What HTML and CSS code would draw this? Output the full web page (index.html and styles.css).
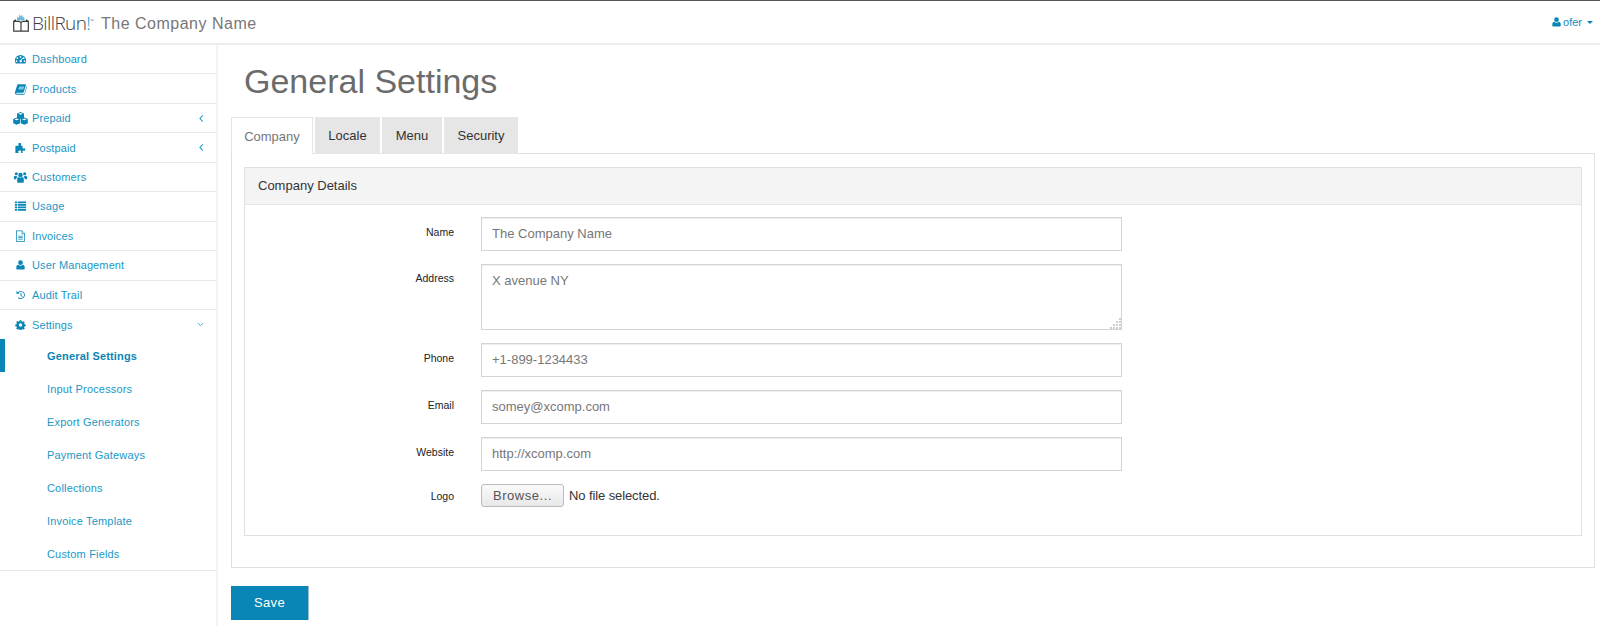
FILE: index.html
```html
<!DOCTYPE html>
<html lang="en">
<head>
<meta charset="utf-8">
<title>General Settings</title>
<link rel="stylesheet" href="styles.css">
</head>
<body>
<svg class="defs" width="0" height="0" aria-hidden="true">
  <symbol id="i-dashboard" viewBox="0 0 16 16"><path fill-rule="evenodd" d="M8 2.500a7.500 7.500 0 0 1 7.500 7.500c0 1.400-.4 2.600-1 3.600-.1.200-.3.300-.5.300H2c-.2 0-.4-.1-.5-.3-.6-1-1-2.200-1-3.600A7.500 7.500 0 0 1 8 2.500zM8 4a1.200 1.200 0 1 0 0 2.400A1.200 1.200 0 0 0 8 4zM3.800 5.700a1.200 1.200 0 1 0 0 2.400 1.200 1.200 0 0 0 0-2.400zM12.200 5.700a1.200 1.200 0 1 0 0 2.400 1.200 1.200 0 0 0 0-2.400zM2.700 9.500a1.200 1.200 0 1 0 0 2.400 1.200 1.200 0 0 0 0-2.400zM13.300 9.500a1.200 1.200 0 1 0 0 2.400 1.200 1.200 0 0 0 0-2.400zM10.200 6.500 8.300 9.400a1.600 1.600 0 1 0 1.100.5l1.600-3z"/></symbol>
  <symbol id="i-book" viewBox="0 0 16 16"><path fill-rule="evenodd" d="M4.500 1.500h10c.6 0 .9.500.7 1.100l-2.700 9c-.3 1-.9 1.400-1.800 1.400H2.800c-.5 0-.8.500-.6.800.2.300.5.400 1 .4h9.400c.4 0 .6-.2.700-.5l3-9.700c.4.300.6.800.4 1.400L13.900 14c-.2.800-1 1.500-1.900 1.500H3.200c-1.300 0-2.400-1-2.600-2.200-.1-.5-.1-.9.100-1.300l3-9.500c.1-.5.400-1 .8-1zM6 5v1h6.500l.3-1zM5.300 7.200v1h6.500l.3-1z"/></symbol>
  <symbol id="i-cubes" viewBox="0 0 18 16"><path fill-rule="evenodd" d="M9 0l4.300 1.700V7L9 8.600 4.700 7V1.700zM6.200 2.300 9 3.400l2.800-1.100L9 1.200zM0 8.500l4.300-1.700 4.300 1.700v5.300l-4.300 1.900L0 13.800zM1.500 9.100l2.800 1.100 2.800-1.100-2.800-1zM9.400 8.500l4.300-1.700L18 8.500v5.300l-4.300 1.900-4.300-1.900zM10.900 9.100l2.800 1.100 2.800-1.100-2.800-1z"/></symbol>
  <symbol id="i-puzzle" viewBox="0 0 16 16"><path d="M7 1.200c1.200 0 1.900.7 1.900 1.500 0 .7-.6 1-.6 1.700 0 .4.300.6.700.6h1.800v3.200c0 .3.200.5.500.5.600 0 .9-.5 1.600-.5.900 0 1.500.8 1.500 1.800s-.6 1.800-1.500 1.800c-.7 0-1-.5-1.600-.5-.3 0-.5.200-.5.500v3H8.400c0-.8.600-1.100.6-1.900 0-.9-.9-1.500-2-1.500s-2 .6-2 1.500c0 .8.600 1.100.6 1.900H1.200V5h3.700c.4 0 .7-.2.700-.6 0-.7-.6-1-.6-1.700 0-.8.800-1.500 2-1.500z"/></symbol>
  <symbol id="i-users" viewBox="0 0 18 16"><circle cx="9" cy="5.200" r="3"/><circle cx="3.400" cy="3.800" r="2"/><circle cx="14.600" cy="3.800" r="2"/><path d="M4.600 15V11c0-1.800 1.200-2.900 2.200-2.900.6.500 1.300.8 2.200.8s1.600-.3 2.200-.8c1 0 2.200 1.100 2.200 2.900v4c0 .3-.2.500-.6.500H5.200c-.4 0-.6-.2-.6-.5zM.2 10.800V8.300c0-1 .7-2 1.500-2 .5.400 1 .6 1.600.6.300 0 .6 0 .8-.1 0 .6.200 1.100.6 1.600C3.700 8.800 3.300 9.700 3.300 11H1c-.5 0-.8-.1-.8-.2zM17.800 10.800V8.300c0-1-.7-2-1.500-2-.5.400-1 .6-1.600.6-.3 0-.6 0-.8-.1 0 .6-.2 1.100-.6 1.600 1 .4 1.400 1.300 1.400 2.600H17c.5 0 .8-.1.800-.2z"/></symbol>
  <symbol id="i-list" viewBox="0 0 16 16"><path d="M.5 2h3v2.400h-3zM4.500 2h11v2.400h-11zM.5 5.300h3v2.400h-3zM4.500 5.300h11v2.400h-11zM.5 8.600h3V11h-3zM4.500 8.600h11V11h-11zM.5 11.900h3v2.400h-3zM4.500 11.900h11v2.400h-11z"/></symbol>
  <symbol id="i-file" viewBox="0 0 16 16"><path fill-rule="evenodd" d="M2 .5h8l4 4V15c0 .3-.2.500-.5.500h-11c-.3 0-.5-.2-.5-.5zM3 1.500v13h10V5.500H9.500v-4zM10.500 1.800v2.700h2.700zM5 7.500h6v1H5zM5 9.500h6v1H5zM5 11.500h6v1H5z"/></symbol>
  <symbol id="i-user" viewBox="0 0 14 16"><circle cx="7" cy="4.300" r="3.800"/><path d="M3.300 7.500C4.200 8.400 5.500 9 7 9s2.800-.6 3.700-1.500c1.800.2 3 1.700 3 4.200v1.800c0 1-.7 1.700-1.700 1.700H2c-1 0-1.700-.7-1.700-1.700v-1.800c0-2.500 1.200-4 3-4.200z"/></symbol>
  <symbol id="i-history" viewBox="0 0 16 16"><path d="M8.500 1.500a6.500 6.500 0 1 1-4.600 11.100l1.100-1.100a5 5 0 1 0 0-7.100l1.500 1.500H1.500V1.500L3.900 3.400A6.500 6.500 0 0 1 8.500 1.500zM8 4.800h1.500v3.500l2 2-1 1L8 8.900z"/></symbol>
  <symbol id="i-cog" viewBox="0 0 16 16"><path fill-rule="evenodd" d="M6.600.8h2.800l.4 2 1.400.6 1.700-1.100 2 2-1.100 1.700.6 1.400 2 .4v2.800l-2 .4-.6 1.400 1.100 1.700-2 2-1.700-1.100-1.400.6-.4 2H6.600l-.4-2-1.400-.6-1.700 1.100-2-2 1.100-1.700-.6-1.400-2-.4V7.600l2-.4.6-1.400-1.100-1.700 2-2 1.700 1.100 1.400-.6zM8 5.800a2.700 2.700 0 1 0 0 5.400 2.700 2.700 0 0 0 0-5.400z" transform="translate(0 -.5)"/></symbol>
  <symbol id="i-left" viewBox="0 0 8 10"><path d="M5.500 1.500 2.200 5l3.300 3.500" fill="none" stroke="currentColor" stroke-width="1.200"/></symbol>
  <symbol id="i-down" viewBox="0 0 10 8"><path d="M1.500 2.200 5 5.500l3.500-3.300" fill="none" stroke="currentColor" stroke-width="1.200"/></symbol>
</svg>

<header class="topbar">
  <a class="brand">
    <svg class="brand-icon" viewBox="0 0 16 18" aria-hidden="true">
      <path d="M4 6.500 4.400 2l1.200 2L6.700 0l1.100 2.800L9 .5l1 3.500 1-1.800.6 4.300z" fill="#6db8dc"/>
      <path d="M.7 7.300h4.800c1 0 2 .6 2.500 1.500.5-.9 1.500-1.500 2.500-1.500h4.800v9.900H.7zM8 8.800v8.400M.7 7.300 3 5.800M15.300 7.300 13 5.800" fill="none" stroke="#3c3c3c" stroke-width="1.200"/>
    </svg>
    <span class="brand-name">BillRun<span class="brand-bang">!</span><sup class="brand-tm">™</sup></span>
  </a>
  <span class="company">The Company Name</span>
  <a class="user"><svg class="user-icon"><use href="#i-user"/></svg> ofer <span class="caret"></span></a>
</header>

<div class="layout">
  <nav class="sidebar">
    <ul class="menu">
      <li class="item"><svg class="icon"><use href="#i-dashboard"/></svg>Dashboard</li>
      <li class="item"><svg class="icon"><use href="#i-book"/></svg>Products</li>
      <li class="item"><svg class="icon icon-wide"><use href="#i-cubes"/></svg>Prepaid<svg class="arrow"><use href="#i-left"/></svg></li>
      <li class="item"><svg class="icon"><use href="#i-puzzle"/></svg>Postpaid<svg class="arrow"><use href="#i-left"/></svg></li>
      <li class="item"><svg class="icon"><use href="#i-users"/></svg>Customers</li>
      <li class="item"><svg class="icon"><use href="#i-list"/></svg>Usage</li>
      <li class="item"><svg class="icon"><use href="#i-file"/></svg>Invoices</li>
      <li class="item"><svg class="icon icon-sm"><use href="#i-user"/></svg>User Management</li>
      <li class="item"><svg class="icon icon-sm"><use href="#i-history"/></svg>Audit Trail</li>
      <li class="item item-open"><svg class="icon icon-sm"><use href="#i-cog"/></svg>Settings<svg class="arrow arrow-down"><use href="#i-down"/></svg></li>
      <li class="sub sub-active">General Settings</li>
      <li class="sub">Input Processors</li>
      <li class="sub">Export Generators</li>
      <li class="sub">Payment Gateways</li>
      <li class="sub">Collections</li>
      <li class="sub">Invoice Template</li>
      <li class="sub">Custom Fields</li>
    </ul>
  </nav>

  <main class="content">
    <h1 class="title">General Settings</h1>
    <div class="tabs">
      <a class="tab tab-active tab-company">Company</a>
      <a class="tab tab-locale">Locale</a>
      <a class="tab tab-menu">Menu</a>
      <a class="tab tab-security">Security</a>
    </div>
    <section class="tab-body">
      <div class="panel">
        <div class="panel-heading">Company Details</div>
        <form class="panel-body">
          <div class="row"><label class="label">Name</label><input class="field field-line" value="The Company Name"></div>
          <div class="row row-top"><label class="label">Address</label><div class="area-wrap"><textarea class="field area">X avenue NY</textarea><svg class="grip" viewBox="0 0 11 11" aria-hidden="true"><path d="M9 0h2v2H9zM6 3h2v2H6zM9 3h2v2H9zM3 6h2v2H3zM6 6h2v2H6zM9 6h2v2H9zM0 9h2v2H0zM3 9h2v2H3zM6 9h2v2H6zM9 9h2v2H9z" fill="#cfcfcf"/></svg></div></div>
          <div class="row"><label class="label">Phone</label><input class="field field-line" value="+1-899-1234433"></div>
          <div class="row"><label class="label">Email</label><input class="field field-line" value="somey@xcomp.com"></div>
          <div class="row"><label class="label">Website</label><input class="field field-line" value="http://xcomp.com"></div>
          <div class="row row-logo"><label class="label">Logo</label><div class="file"><button type="button" class="browse">Browse...</button><span class="file-name">No file selected.</span></div></div>
        </form>
      </div>
    </section>
    <button type="button" class="save">Save</button>
  </main>
</div>
</body>
</html>
```
FILE: styles.css
```css
* { box-sizing: border-box; }
html, body { margin: 0; height: 626px; overflow: hidden; }
body { font-family: "Liberation Sans", Arial, sans-serif; background: #fff; color: #333; font-size: 13px; }
.defs { position: absolute; }

.topbar { height: 45px; border-top: 1px solid #555; border-bottom: 2px solid #eee; display: flex; align-items: center; padding: 3px 7px 0 13px; }
.brand { display: flex; align-items: center; color: #444; width: 88px; margin-top: -1px; }
.brand-icon { width: 16px; height: 18px; flex: none; }
.brand-name { font-family: "Open Sans", sans-serif; font-weight: 300; font-size: 19px; line-height: 20px; letter-spacing: -.6px; margin-left: 3px; color: #3d3d3d; }
.brand-bang { color: #1a9bc9; }
.brand-tm { font-size: 5px; vertical-align: super; letter-spacing: 0; line-height: 0; }
.company { font-size: 16px; color: #777; letter-spacing: .5px; margin-top: 1px; }
.user { margin-left: auto; margin-top: -3px; color: #0a8bbb; font-size: 11px; display: flex; align-items: center; gap: 2px; }
.user-icon { width: 9px; height: 10px; fill: #0a86b6; }
.caret { width: 0; height: 0; border: 3px solid transparent; border-top: 3px solid #0a86b6; border-bottom: 0; margin-left: 3px; }

.layout { display: flex; height: 581px; }
.sidebar { width: 218px; flex: none; border-right: 2px solid #f3f3f3; }
.menu { list-style: none; margin: 0; padding: 0; border-bottom: 1px solid #e7e7e7; }
.item { height: 29.45px; display: flex; align-items: center; padding-left: 13px; padding-right: 11px; font-size: 11px; letter-spacing: .12px; color: #1c97c6; border-bottom: 1px solid #e9e9e9; }
.item-open { border-bottom: 0; }
.icon { width: 15px; height: 12px; margin-right: 4px; flex: none; fill: #0a86b6; }
.icon-wide { height: 13px; }
.icon-sm { height: 10px; }
.arrow { width: 7px; height: 9px; margin-left: auto; color: #1c97c6; }
.arrow-down { margin-right: 1px; }
.sub { height: 33px; padding-left: 47px; display: flex; align-items: center; font-size: 11px; letter-spacing: .17px; color: #1c97c6; }
.sub-active { font-weight: bold; color: #0a86b6; border-left: 5px solid #0a86b6; padding-left: 42px; }

.content { flex: 1; padding: 0 5px 0 13px; }
.title { margin: 0; height: 72px; padding: 20px 0 0 13px; font-size: 34px; line-height: 33px; font-weight: 400; color: #6b6b6b; }
.tabs { display: flex; gap: 2px; height: 37px; position: relative; z-index: 1; }
.tab { display: flex; align-items: center; justify-content: center; font-size: 13px; background: #e6e6e6; color: #333; }
.tab-active { background: #fff; color: #777; border: 1px solid #e4e4e4; border-bottom: 0; }
.tab-company { width: 82px; }
.tab-locale { width: 65px; }
.tab-menu { width: 60px; }
.tab-security { width: 74px; }
.tab-body { border: 1px solid #e0e0e0; height: 415px; padding: 13px 12px 0; margin-top: -1px; }
.panel { border: 1px solid #e0e0e0; height: 369px; }
.panel-heading { height: 37px; background: #f4f4f4; border-bottom: 1px solid #e4e4e4; padding: 0 13px 2px; display: flex; align-items: center; font-size: 13px; color: #333; }
.panel-body { padding: 12px 0 0; }
.row { display: flex; align-items: center; margin-bottom: 13px; }
.row-top { align-items: flex-start; }
.row-logo { margin-top: 3px; }
.label { width: 209px; margin-right: 27px; padding-bottom: 4px; text-align: right; font-size: 10.5px; color: #222; }
.row-logo .label { padding-bottom: 0; padding-top: 0; }
.row-top .label { padding-top: 8px; }
.field { width: 641px; height: 34px; border: 1px solid #d4d4d4; box-shadow: inset 0 1px 1px rgba(0, 0, 0, .075); padding: 0 10px; font: 13px "Liberation Sans", Arial, sans-serif; color: #777; background: #fff; border-radius: 0; outline: 0; display: block; }
.field-line { padding-bottom: 2px; }
.area-wrap { position: relative; width: 641px; height: 66px; }
.area { height: 66px; padding-top: 8px; resize: none; overflow: hidden; }
.grip { position: absolute; right: 1px; bottom: 1px; width: 11px; height: 11px; }
.file { display: flex; align-items: center; gap: 5px; }
.browse { width: 83px; height: 23px; font: 13px "Liberation Sans", Arial, sans-serif; letter-spacing: .55px; color: #555; background: linear-gradient(#fafafa, #e8e8e8); border: 1px solid #bbb; border-radius: 3px; padding: 0; }
.file-name { font-size: 13px; letter-spacing: -.1px; color: #333; }
.save { display: block; margin-top: 18px; width: 78px; height: 34px; background: #0a86b6; color: #fff; border: 0; border-right: 1px solid #9dbfd4; font: 13px "Liberation Sans", Arial, sans-serif; letter-spacing: .3px; padding: 0 0 1px; }
```
